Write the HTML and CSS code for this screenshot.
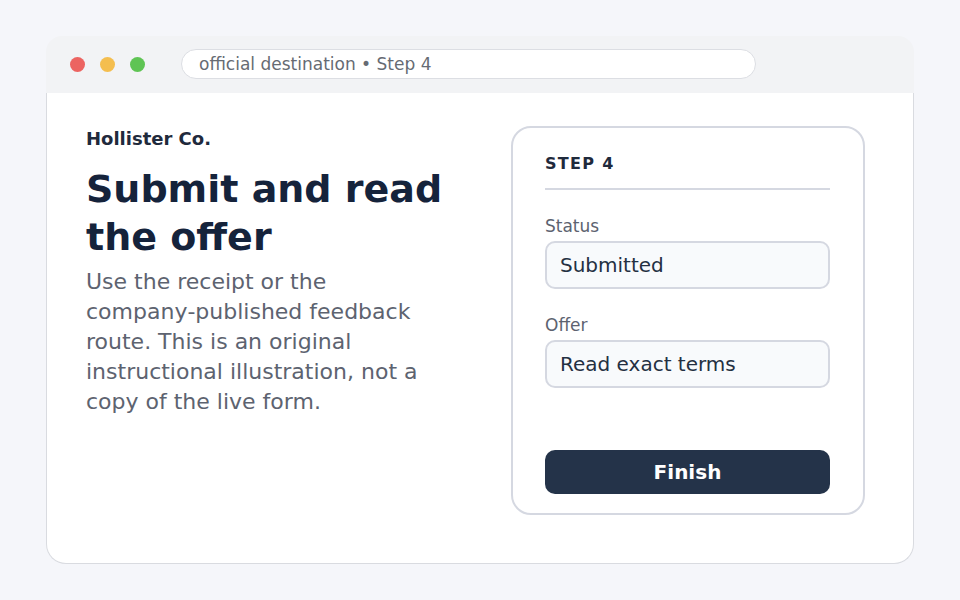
FILE: index.html
```html
<!DOCTYPE html>
<html lang="en">
<head>
  <meta charset="UTF-8">
  <meta name="viewport" content="width=device-width, initial-scale=1.0">
  <title>Submit and read the offer</title>
  <link rel="stylesheet" href="styles.css">
</head>
<body>
  <div class="window">
    <div class="titlebar">
      <div class="dots">
        <span class="dot dot-red"></span>
        <span class="dot dot-yellow"></span>
        <span class="dot dot-green"></span>
      </div>
      <div class="address">official destination • Step 4</div>
    </div>

    <div class="content">
      <div class="intro">
        <div class="brand">Hollister Co.</div>
        <h1>Submit and read the offer</h1>
        <p>Use the receipt or the company&#8209;published feedback route. This is an original instructional illustration, not a copy of the live form.</p>
      </div>

      <div class="card">
        <div class="card-head">STEP 4</div>
        <div class="field">
          <label>Status</label>
          <div class="input">Submitted</div>
        </div>
        <div class="field">
          <label>Offer</label>
          <div class="input">Read exact terms</div>
        </div>
        <button class="btn">Finish</button>
      </div>
    </div>
  </div>
</body>
</html>
```

FILE: styles.css
```css
body {
  margin: 0;
  padding: 36px 46px;
  background-color: #f5f6fa;
  font-family: "DejaVu Sans", Verdana, sans-serif;
}

.window {
  width: 868px;
}

.titlebar {
  height: 57px;
  display: flex;
  align-items: center;
  gap: 36px;
  padding: 0 24px;
  background-color: #f2f3f5;
  border-radius: 16px 16px 0 0;
}

.dots {
  display: flex;
  gap: 15px;
}

.dot {
  width: 15px;
  height: 15px;
  border-radius: 50%;
}

.dot-red { background-color: #ec6461; }
.dot-yellow { background-color: #f4be4f; }
.dot-green { background-color: #5fc454; }

.address {
  flex: 1;
  max-width: 575px;
  box-sizing: border-box;
  height: 30px;
  line-height: 28px;
  margin-top: -2px;
  padding: 0 17px;
  background-color: white;
  border: 1px solid #dcdee3;
  border-radius: 15px;
  font-size: 17px;
  color: #666b73;
}

.content {
  display: grid;
  grid-template-columns: 1fr 354px;
  gap: 60px;
  padding: 33px 48px 48px 39px;
  background-color: white;
  border: 1px solid #d9dbe0;
  border-top: none;
  border-radius: 0 0 20px 20px;
}

.intro {
  padding-top: 2px;
}

.brand {
  font-size: 18px;
  font-weight: bold;
  color: #1f2a3c;
}

h1 {
  margin: 16px 0 6px;
  font-size: 38px;
  line-height: 48px;
  color: #15233b;
}

p {
  margin: 0;
  max-width: 360px;
  font-size: 22px;
  line-height: 30px;
  color: #5d6370;
}

.card {
  padding: 26px 33px 19px 32px;
  border: 2px solid #d5d8e1;
  border-radius: 20px;
}

.card-head {
  padding-bottom: 14px;
  border-bottom: 2px solid #d5d8e1;
  font-size: 16px;
  line-height: 20px;
  font-weight: bold;
  letter-spacing: 1.3px;
  color: #1f2a3c;
}

.field {
  margin-top: 26px;
}

label {
  display: block;
  margin-bottom: 5px;
  font-size: 17px;
  line-height: 20px;
  color: #5d6370;
}

.input {
  height: 48px;
  box-sizing: border-box;
  line-height: 44px;
  padding: 0 13px;
  background-color: #f8fafc;
  border: 2px solid #d5d8e1;
  border-radius: 10px;
  font-size: 20px;
  color: #243042;
}

.btn {
  display: block;
  width: 100%;
  height: 44px;
  margin-top: 62px;
  background-color: #243349;
  color: white;
  border: none;
  border-radius: 10px;
  font-family: inherit;
  font-size: 20px;
  font-weight: bold;
}
```
